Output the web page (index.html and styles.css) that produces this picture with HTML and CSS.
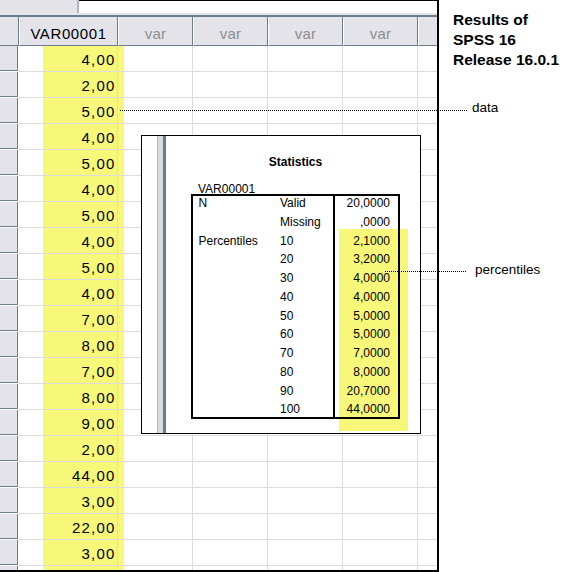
FILE: index.html
```html
<!DOCTYPE html>
<html>
<head>
<meta charset="utf-8">
<link rel="stylesheet" href="styles.css">
</head>
<body>
<div class="page">
  <div class="sheet">
    <div class="topbar">
      <div class="tb-row"><div class="namebox"></div><div class="editor"></div></div>
      <div class="tb-sep"></div>
    </div>
    <div class="grid">
      <div class="hc corner"></div><div class="hc">VAR00001</div><div class="hc var">var</div><div class="hc var">var</div><div class="hc var">var</div><div class="hc var">var</div><div class="hc last"></div>
      <div class="rh"></div><div class="c">4,00</div><div class="c"></div><div class="c"></div><div class="c"></div><div class="c"></div><div class="c last"></div>
      <div class="rh"></div><div class="c">2,00</div><div class="c"></div><div class="c"></div><div class="c"></div><div class="c"></div><div class="c last"></div>
      <div class="rh"></div><div class="c">5,00</div><div class="c"></div><div class="c"></div><div class="c"></div><div class="c"></div><div class="c last"></div>
      <div class="rh"></div><div class="c">4,00</div><div class="c"></div><div class="c"></div><div class="c"></div><div class="c"></div><div class="c last"></div>
      <div class="rh"></div><div class="c">5,00</div><div class="c"></div><div class="c"></div><div class="c"></div><div class="c"></div><div class="c last"></div>
      <div class="rh"></div><div class="c">4,00</div><div class="c"></div><div class="c"></div><div class="c"></div><div class="c"></div><div class="c last"></div>
      <div class="rh"></div><div class="c">5,00</div><div class="c"></div><div class="c"></div><div class="c"></div><div class="c"></div><div class="c last"></div>
      <div class="rh"></div><div class="c">4,00</div><div class="c"></div><div class="c"></div><div class="c"></div><div class="c"></div><div class="c last"></div>
      <div class="rh"></div><div class="c">5,00</div><div class="c"></div><div class="c"></div><div class="c"></div><div class="c"></div><div class="c last"></div>
      <div class="rh"></div><div class="c">4,00</div><div class="c"></div><div class="c"></div><div class="c"></div><div class="c"></div><div class="c last"></div>
      <div class="rh"></div><div class="c">7,00</div><div class="c"></div><div class="c"></div><div class="c"></div><div class="c"></div><div class="c last"></div>
      <div class="rh"></div><div class="c">8,00</div><div class="c"></div><div class="c"></div><div class="c"></div><div class="c"></div><div class="c last"></div>
      <div class="rh"></div><div class="c">7,00</div><div class="c"></div><div class="c"></div><div class="c"></div><div class="c"></div><div class="c last"></div>
      <div class="rh"></div><div class="c">8,00</div><div class="c"></div><div class="c"></div><div class="c"></div><div class="c"></div><div class="c last"></div>
      <div class="rh"></div><div class="c">9,00</div><div class="c"></div><div class="c"></div><div class="c"></div><div class="c"></div><div class="c last"></div>
      <div class="rh"></div><div class="c">2,00</div><div class="c"></div><div class="c"></div><div class="c"></div><div class="c"></div><div class="c last"></div>
      <div class="rh"></div><div class="c">44,00</div><div class="c"></div><div class="c"></div><div class="c"></div><div class="c"></div><div class="c last"></div>
      <div class="rh"></div><div class="c">3,00</div><div class="c"></div><div class="c"></div><div class="c"></div><div class="c"></div><div class="c last"></div>
      <div class="rh"></div><div class="c">22,00</div><div class="c"></div><div class="c"></div><div class="c"></div><div class="c"></div><div class="c last"></div>
      <div class="rh"></div><div class="c">3,00</div><div class="c"></div><div class="c"></div><div class="c"></div><div class="c"></div><div class="c last"></div>
      <div class="rh"></div><div class="c"></div><div class="c"></div><div class="c"></div><div class="c"></div><div class="c"></div><div class="c last"></div>
    </div>
    <div class="hl-col"></div>

    <div class="stats">
      <div class="hl-pct"></div>
      <div class="bar"></div>
      <div class="stats-body">
        <div class="st-title">Statistics</div>
        <div class="st-var">VAR00001</div>
        <div class="st-table">
          <div>N</div><div>Valid</div><div class="v">20,0000</div>
          <div></div><div>Missing</div><div class="v">,0000</div>
          <div>Percentiles</div><div>10</div><div class="v">2,1000</div>
          <div></div><div>20</div><div class="v">3,2000</div>
          <div></div><div>30</div><div class="v">4,0000</div>
          <div></div><div>40</div><div class="v">4,0000</div>
          <div></div><div>50</div><div class="v">5,0000</div>
          <div></div><div>60</div><div class="v">5,0000</div>
          <div></div><div>70</div><div class="v">7,0000</div>
          <div></div><div>80</div><div class="v">8,0000</div>
          <div></div><div>90</div><div class="v">20,7000</div>
          <div></div><div>100</div><div class="v">44,0000</div>
        </div>
      </div>
    </div>
  </div>

  <div class="side">
    <div class="side-title">Results of<br>SPSS 16<br>Release 16.0.1</div>
  </div>
</div>

<svg class="leaders" width="572" height="572" viewBox="0 0 572 572">
  <line x1="120" y1="110.5" x2="468" y2="110.5" />
  <line x1="385" y1="271.5" x2="467" y2="271.5" />
</svg>
<div class="note note-data">data</div>
<div class="note note-pct">percentiles</div>
</body>
</html>
```

FILE: styles.css
```css
* { box-sizing: border-box; margin: 0; padding: 0; }
html, body { width: 572px; height: 572px; overflow: hidden; background: #fff; }
body { position: relative; font-family: "Liberation Sans", Arial, sans-serif; color: #000; }

.page { display: flex; width: 572px; height: 572px; }

.sheet {
  position: relative;
  z-index: 0;
  flex: none;
  width: 439px;
  height: 572px;
  border-right: 2px solid #000;
  border-bottom: 2px solid #000;
  background: #fff;
  overflow: hidden;
}

.topbar { height: 17px; border-bottom: 2px solid #6d7d8d; }
.tb-row { display: flex; height: 13px; }
.namebox { width: 79px; background: #e4e4e8; border-right: 2px solid #b4b4bc; }
.editor { flex: 1; background: #fff; border-top: 1px solid #000; }
.tb-sep { height: 2px; background: #e6e6ea; }

.grid {
  display: grid;
  grid-template-columns: 19px 99px 75px 75px 75px 75px 19px;
  grid-template-rows: 29px;
  grid-auto-rows: 26px;
}

.hc {
  background: #e3e3e9;
  border-left: 1px solid #fff;
  border-right: 1px solid #6d7d8d;
  border-bottom: 1px solid #6d7d8d;
  font-size: 15px;
  letter-spacing: 0.6px;
  text-align: center;
  padding-top: 5px;
  line-height: 23px;
  white-space: nowrap;
}
.hc.corner { border-left: none; }
.hc.var { color: #8e8e8e; letter-spacing: 0.3px; }
.hc.last { border-right: none; }

.rh {
  background: #e3e3e9;
  border-right: 1px solid #fff;
  border-bottom: 1px solid #fff;
  box-shadow: inset -1px -1px 0 #6d7d8d;
}

.c {
  border-right: 1px solid #dcdcdc;
  border-bottom: 1px solid #dcdcdc;
  font-size: 15px;
  letter-spacing: 1.2px;
  text-align: right;
  padding: 2px 1.5px 0 0;
  line-height: 23px;
}
.c.last { border-right: none; }

.hl-col {
  position: absolute;
  z-index: -1;
  left: 43px;
  top: 46px;
  width: 81px;
  height: 524px;
  background: #f7f77a;
}

.stats {
  position: absolute;
  z-index: 2;
  left: 141px;
  top: 135px;
  width: 280px;
  height: 299px;
  border: 1px solid #000;
  background: #fff;
  display: flex;
  padding-left: 15px;
}
.hl-pct {
  position: absolute;
  z-index: -1;
  left: 197px;
  top: 93px;
  width: 69px;
  height: 202px;
  background: #f7f77a;
}
.bar {
  flex: none;
  width: 9px;
  border-left: 1px solid #9dbccb;
  border-right: 3px solid #6c7a89;
  background: #d6dae2;
}
.stats-body { padding-top: 19px; padding-left: 25px; font-size: 12px; }
.st-title { width: 209px; text-align: center; font-weight: bold; line-height: 14px; margin-bottom: 15px; }
.st-var { line-height: 10px; padding-left: 7px; }
.st-table {
  width: 209px;
  display: grid;
  grid-template-columns: 89px 53px 67px;
  grid-auto-rows: 18.75px;
  line-height: 18.75px;
  box-shadow: inset 0 0 0 2px #000;
}
.st-table > div:nth-child(3n+1) { padding-left: 7.5px; }
.st-table .v { border-left: 2px solid #000; text-align: right; padding-right: 10px; }

.side { flex: none; width: 133px; padding: 9.7px 0 0 14px; }
.side-title { font-weight: bold; font-size: 15.5px; line-height: 20.3px; }

.leaders { position: absolute; left: 0; top: 0; z-index: 5; pointer-events: none; }
.leaders line { stroke: #000; stroke-width: 1; stroke-dasharray: 1 1; shape-rendering: crispEdges; }

.note { position: absolute; z-index: 6; font-size: 13.5px; line-height: 15px; white-space: nowrap; }
.note-data { left: 472px; top: 99.5px; }
.note-pct { left: 475px; top: 262px; }
```
